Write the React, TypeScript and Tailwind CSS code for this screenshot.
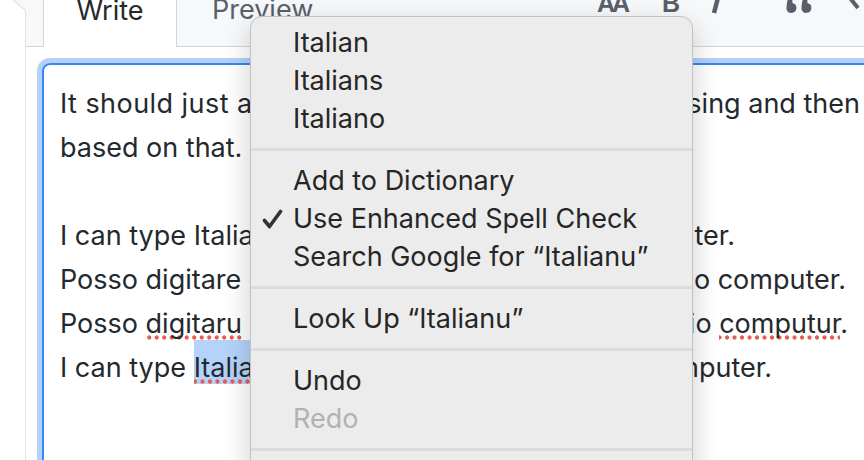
import React from "react";

// spellcheck squiggle: round red dots along the bottom of the word
const misspelt =
  "bg-[radial-gradient(circle,#ea5a4f_1.9px,transparent_2.4px)] bg-[length:7.5px_5px] bg-repeat-x bg-bottom";

function Line({ children }: { children?: React.ReactNode }) {
  return <div className="h-[44px] leading-[44px] whitespace-pre">{children}</div>;
}

// a line whose middle sits under the context menu
function SplitLine({
  width,
  left,
  middle,
  right,
}: {
  width: string;
  left: React.ReactNode;
  middle: string;
  right: React.ReactNode;
}) {
  return (
    <div className={`flex h-[44px] leading-[44px] whitespace-pre ${width}`}>
      <span className="shrink-0">{left}</span>
      <span className="min-w-0 flex-1 overflow-hidden">{middle}</span>
      <span className="shrink-0">{right}</span>
    </div>
  );
}

function MenuItem({
  children,
  checked,
  disabled,
}: {
  children: React.ReactNode;
  checked?: boolean;
  disabled?: boolean;
}) {
  return (
    <div
      className={`relative h-[38px] leading-[38px] pl-[42px] whitespace-nowrap ${
        disabled ? "text-[#b2b2b2]" : "text-[#262626]"
      }`}
    >
      {checked && (
        <svg
          className="absolute left-[11px] top-[9px]"
          width="21"
          height="20"
          viewBox="0 0 21 20"
          fill="none"
        >
          <path
            d="M2.5 11.5 L7.5 17.5 L18.5 2.5"
            stroke="#333"
            strokeWidth="3.6"
            strokeLinecap="round"
            strokeLinejoin="round"
          />
        </svg>
      )}
      {children}
    </div>
  );
}

function Separator() {
  return <div className="mt-[10px] mb-[11px] h-[3px] bg-[#dcdcdc]" />;
}

export default function App() {
  return (
    <div className="relative w-[864px] h-[460px] overflow-hidden bg-white font-['Inter',sans-serif] text-[27px]">
      {/* comment box pointer */}
      <svg className="absolute left-0 top-0" width="27" height="12" viewBox="0 0 27 12">
        <path d="M13 0 L25.5 10.5 L27 10.5 L27 0 Z" fill="#f6f8fa" />
        <path d="M13 0 L25.5 10.5" stroke="#dfe2e6" strokeWidth="1.2" />
      </svg>

      <div className="ml-[25px] h-full border-l border-[#dfe2e6]">
        {/* Tabs + toolbar */}
        <div className="flex h-[47px] items-end border-b border-[#d1d5da] bg-[#f6f8fa] pl-[17px]">
          <div className="-mb-px flex h-[47px] w-[134px] justify-center border-x border-[#d1d5da] bg-white text-[#24292e]">
            <span className="-mt-[6px] leading-[34px]">Write</span>
          </div>
          <div className="flex h-[47px] w-[140px] pl-[35px] text-[#586069]">
            <span className="-mt-[6px] leading-[34px]">Preview</span>
          </div>

          {/* markdown toolbar, mostly scrolled out of view */}
          <div className="-mt-[10px] ml-[280px] flex items-start self-start text-[#586069]">
            <span className="w-[33px] font-['Liberation_Sans',sans-serif] text-[25px] font-bold leading-[26px] tracking-[-3px]">
              AA
            </span>
            <span className="ml-[32px] w-[18px] font-['Liberation_Sans',sans-serif] text-[25px] font-bold leading-[26px]">
              B
            </span>
            <svg className="ml-[31px]" width="12" height="26" viewBox="0 0 12 26">
              <path d="M3 23 L10 -4" stroke="#586069" strokeWidth="4.5" />
            </svg>
            <svg className="ml-[63px]" width="26" height="26" viewBox="0 0 26 26">
              <path d="M0.5 19 C0.5 10 3 4 9 0 L10 3 C7 5 6 8 6.5 13 A5 5 0 1 1 0.5 19 Z" fill="#586069" />
              <path d="M15.5 19 C15.5 10 18 4 24 0 L25 3 C22 5 21 8 21.5 13 A5 5 0 1 1 15.5 19 Z" fill="#586069" />
            </svg>
            <svg className="ml-[36px]" width="16" height="26" viewBox="0 0 16 26">
              <path d="M10 -2 L2 8 L10 18" stroke="#586069" strokeWidth="4" fill="none" strokeLinejoin="round" />
            </svg>
          </div>
        </div>

        {/* focused textarea */}
        <div className="pl-[16px] pt-[16px]">
          <div className="w-[880px] h-[420px] rounded-[8px] border-2 border-[#2f89fc] pl-[16px] pt-[17px] text-[#24292e] shadow-[0_0_0_5px_#b6d0f6]">
            <SplitLine
              width="w-[800px]"
              left={<span className="tracking-[0.45px]">It should just automatically</span>}
              middle=" detect which language I'm u"
              right="sing and then"
            />
            <Line>based on that.</Line>
            <Line />
            <SplitLine
              width="w-[675px]"
              left="I can type Italian on my"
              middle=" new compu"
              right="ter."
            />
            <SplitLine
              width="w-[786px]"
              left="Posso digitare italiano"
              middle=" sul m"
              right="io computer."
            />
            <SplitLine
              width="w-[788px]"
              left={
                <>
                  Posso <span className={misspelt}>digitaru</span>{" "}
                  <span className={misspelt}>italianu</span>
                </>
              }
              middle=" sul m"
              right={
                <>
                  io <span className={misspelt}>computur</span>.
                </>
              }
            />
            <SplitLine
              width="w-[712px]"
              left={
                <>
                  I can type{" "}
                  <span className={`bg-[#b4d3fa] pt-[11px] ${misspelt}`}>Italianu</span>
                </>
              }
              middle=" on my new co"
              right="mputer."
            />
          </div>
        </div>
      </div>

      {/* spelling context menu */}
      <div className="absolute left-[250px] top-[16px] h-[480px] w-[443px] rounded-[12px] border border-[#c2c2c2] bg-[#ececec] pt-[7px] shadow-[0_10px_28px_rgba(0,0,0,0.2)]">
        <MenuItem>Italian</MenuItem>
        <MenuItem>Italians</MenuItem>
        <MenuItem>Italiano</MenuItem>
        <Separator />
        <MenuItem>Add to Dictionary</MenuItem>
        <MenuItem checked>Use Enhanced Spell Check</MenuItem>
        <MenuItem>Search Google for “Italianu”</MenuItem>
        <Separator />
        <MenuItem>Look Up “Italianu”</MenuItem>
        <Separator />
        <MenuItem>Undo</MenuItem>
        <MenuItem disabled>Redo</MenuItem>
        <Separator />
        <MenuItem>Cut</MenuItem>
      </div>
    </div>
  );
}
